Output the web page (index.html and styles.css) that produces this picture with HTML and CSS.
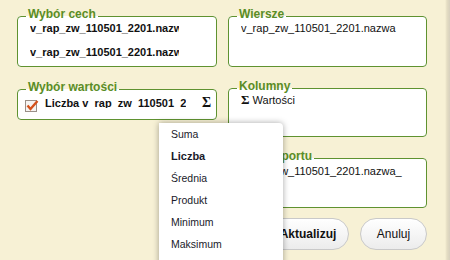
FILE: index.html
```html
<!DOCTYPE html>
<html lang="pl">
<head>
    <meta charset="UTF-8">
    <meta name="viewport" content="width=device-width, initial-scale=1.0">
    <title>Ustawienia raportu</title>
    <link rel="stylesheet" href="styles.css">
</head>
<body>
    <!-- Report settings dialog -->
    <div class="panel">
        <!-- Left column -->
        <div class="column">
            <fieldset class="box box-top">
                <legend>Wybór cech</legend>
                <div class="box-body">
                    <div class="feature">v_rap_zw_110501_2201.nazwa</div>
                    <div class="feature">v_rap_zw_110501_2201.nazwa</div>
                </div>
            </fieldset>
            <fieldset class="box">
                <legend>Wybór wartości</legend>
                <div class="box-body">
                    <div class="value-row">
                        <svg class="check" width="14" height="14" viewBox="0 0 14 14">
                            <rect x="0.5" y="1.5" width="11" height="11" fill="#f6f4f2" stroke="#9a8f88"/>
                            <path d="M2.5 6.5 L5.5 10 L12.5 2" fill="none" stroke="#d4511b" stroke-width="2.4"/>
                        </svg>
                        <span class="value-name">Liczba v_rap_zw_110501_2201.nazwa</span>
                        <span class="sigma">&Sigma;</span>
                    </div>
                </div>
            </fieldset>
        </div>
        <!-- Right column -->
        <div class="column column-right">
            <fieldset class="box box-top">
                <legend>Wiersze</legend>
                <div class="box-body tall">
                    <div class="plain">v_rap_zw_110501_2201.nazwa</div>
                </div>
            </fieldset>
            <fieldset class="box">
                <legend>Kolumny</legend>
                <div class="box-body taller">
                    <div class="plain"><span class="sigma small">&Sigma;</span> Wartości</div>
                </div>
            </fieldset>
            <fieldset class="box">
                <legend>Tytuł raportu</legend>
                <div class="box-body title-body">
                    <div class="plain">v_rap_zw_110501_2201.nazwa_</div>
                </div>
            </fieldset>
            <div class="buttons">
                <button class="btn btn-main">Aktualizuj</button>
                <button class="btn btn-cancel">Anuluj</button>
            </div>
        </div>
    </div>

    <!-- Aggregate function menu opened from the sigma -->
    <ul class="menu">
        <li>Suma</li>
        <li class="selected">Liczba</li>
        <li>Średnia</li>
        <li>Produkt</li>
        <li>Minimum</li>
        <li>Maksimum</li>
    </ul>
</body>
</html>
```

FILE: styles.css
```css
body {
    margin: 0;
    height: 260px;
    font-family: "Liberation Sans", Arial, sans-serif;
    color: #111;
    background: linear-gradient(to right, #f7f1d5 445px, #e4ddc3 447px, #d6d0bd 450px);
}
.panel {
    display: flex;
    gap: 11px;
    padding: 8px 0 0 17px;
}
.column {
    width: 200px;
    display: flex;
    flex-direction: column;
    gap: 14px;
}
.column-right {
    width: 199px;
    gap: 13px;
}
.box {
    margin: 0;
    padding: 0 12px 8px;
    border: 1px solid #5f9230;
    border-radius: 4px;
    background: #fff;
    min-width: 0;
}
.box legend {
    margin-left: -4px;
    padding: 0 2px 4px;
    font-size: 12px;
    line-height: 12px;
    font-weight: bold;
    color: #5a8d26;
}
.box-body {
    margin-top: -2px; /* pulls the first line up under the legend */
    font-size: 11px;
    line-height: 12px;
}
.box-body.tall {
    min-height: 36px;
}
.box-body.taller {
    min-height: 34px;
}
.box-body.title-body {
    min-height: 35px;
    padding-top: 1px;
    box-sizing: border-box;
}
.feature {
    width: 149px;
    font-weight: bold;
    white-space: nowrap;
    overflow: hidden;
}
.feature + .feature {
    margin-top: 12px;
}
.plain {
    white-space: nowrap;
    overflow: hidden;
}
.value-row {
    display: flex;
    align-items: flex-start;
    height: 16px;
    margin-left: -5px;
}
.check {
    margin-top: 4px;
    flex: none;
}
.value-name {
    flex: none;
    margin: 2px 0 0 6px;
    width: 141px;
    height: 11px; /* clips the underscores like the original */
    font-weight: bold;
    white-space: nowrap;
    overflow: hidden;
}
.sigma {
    flex: none;
    margin: 1px 0 0 16px;
    font-family: "Liberation Serif", "Times New Roman", serif;
    font-weight: bold;
    font-size: 14px;
    line-height: 13px;
}
.sigma.small {
    margin: 0;
    font-size: 13px;
    line-height: 12px;
}
.buttons {
    display: flex;
    justify-content: flex-end;
    gap: 11px;
    margin-top: -3px;
}
.btn {
    height: 32px;
    border: 1px solid #c9c9c9;
    border-radius: 16px;
    background: linear-gradient(#ffffff, #ececec);
    font-family: "Liberation Sans", Arial, sans-serif;
    font-size: 12px;
    color: #111;
    padding: 0;
}
.btn-main {
    width: 82px;
    font-weight: bold;
}
.btn-cancel {
    width: 67px;
}
.menu {
    position: absolute;
    left: 159px;
    top: 123px;
    width: 124px;
    height: 150px;
    margin: 0;
    padding: 0;
    list-style: none;
    background: #fff;
    border-radius: 0 4px 0 0;
    box-shadow: 0 0 6px rgba(0, 0, 0, 0.35);
}
.menu li {
    height: 22px;
    line-height: 22px;
    padding-left: 12px;
    font-size: 10.5px;
    color: #1a1a2a;
}
.menu li.selected {
    font-size: 11px;
    font-weight: bold;
}
```
